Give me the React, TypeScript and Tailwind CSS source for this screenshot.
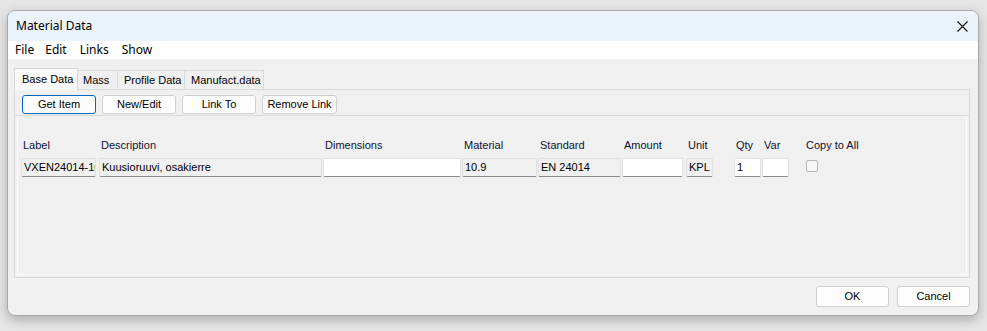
import React from "react";

const font = { fontFamily: '"Liberation Sans", Arial, sans-serif' };

function Btn({ label, w, focused }: { label: string; w: string; focused?: boolean }) {
  return (
    <div
      className={`${w} h-[19px] flex items-center justify-center rounded-[3px] bg-[#fdfdfd] text-[11px] text-black border ${
        focused ? "border-[#0067c0]" : "border-[#d0d0d0]"
      }`}
    >
      {label}
    </div>
  );
}

function Field({
  value,
  w,
  ml,
  white,
}: {
  value?: string;
  w: string;
  ml: string;
  white?: boolean;
}) {
  return (
    <div
      className={`${w} ${ml} h-[19px] flex items-center pl-[2px] overflow-hidden whitespace-nowrap rounded-[2px] border border-[#e0e0e0] border-b-[#8a8a8a] text-[11px] text-black ${
        white ? "bg-white" : "bg-[#f0f0f0]"
      }`}
    >
      {value}
    </div>
  );
}

function Header({ text, w, ml }: { text: string; w: string; ml: string }) {
  return <div className={`${w} ${ml} pl-[2px] text-[11px] text-[#101030] whitespace-nowrap`}>{text}</div>;
}

export default function App() {
  return (
    <div className="w-[987px] h-[331px] bg-[#e6e6e6] pt-[10px] pl-[7px]" style={font}>
      <div className="w-[972px] h-[306px] rounded-[8px] border border-[#a8a8a8] bg-[#f0f0f0] shadow-[0_4px_12px_rgba(0,0,0,0.25)] overflow-hidden flex flex-col">
        {/* Title bar */}
        <div className="h-[30px] bg-[#eaf3fa] flex items-center justify-between pl-[8px] pr-[10px]">
          <span className="text-[12px] text-black" style={{ fontFamily: '"Noto Sans", "Liberation Sans", sans-serif' }}>
            Material Data
          </span>
          <svg width="11" height="11" viewBox="0 0 11 11">
            <path d="M0.5 0.5 L10.5 10.5 M10.5 0.5 L0.5 10.5" stroke="#111" strokeWidth="1.1" />
          </svg>
        </div>
        {/* Menu bar */}
        <div
          className="h-[18px] bg-white flex items-center pl-[7px] gap-[13px] text-[12px] text-black"
          style={{ fontFamily: '"Noto Sans", "Liberation Sans", sans-serif' }}
        >
          <span>File</span>
          <span className="-ml-[2px]">Edit</span>
          <span>Links</span>
          <span>Show</span>
        </div>
        {/* Content */}
        <div className="flex-1 flex flex-col pl-[6px] pr-[8px] pt-[8px]">
          {/* Tabs */}
          <div className="flex items-end h-[22px] text-[11px] text-black">
            <div className="w-[64px] h-[22px] bg-[#f9f9f9] border border-[#d9d9d9] border-b-0 flex items-center pl-[7px] relative z-10 -mb-px">
              Base Data
            </div>
            <div className="w-[40px] h-[19px] border border-[#d9d9d9] border-b-0 border-l-0 flex items-center pl-[5px]">Mass</div>
            <div className="w-[67px] h-[19px] border border-[#d9d9d9] border-b-0 border-l-0 flex items-center pl-[6px]">
              Profile Data
            </div>
            <div className="w-[79px] h-[19px] border border-[#d9d9d9] border-b-0 border-l-0 flex items-center pl-[6px]">
              Manufact.data
            </div>
          </div>
          {/* Tab panel */}
          <div className="h-[189px] border border-[#d9d9d9] flex flex-col">
            <div className="h-[26px] flex items-start pt-[5px] pl-[7px] gap-[6px] border-b border-[#d9d9d9]">
              <Btn label="Get Item" w="w-[74px]" focused />
              <Btn label="New/Edit" w="w-[74px]" />
              <Btn label="Link To" w="w-[74px]" />
              <Btn label="Remove Link" w="w-[75px]" />
            </div>
            <div className="flex-1 mx-[2px] mb-[2px] border border-[#fafafa] border-t-0 pt-[23px] pl-[3px]">
              <div className="flex h-[12px] items-center">
                <Header text="Label" w="w-[75px]" ml="ml-0" />
                <Header text="Description" w="w-[223px]" ml="ml-[3px]" />
                <Header text="Dimensions" w="w-[138px]" ml="ml-[1px]" />
                <Header text="Material" w="w-[75px]" ml="ml-[1px]" />
                <Header text="Standard" w="w-[83px]" ml="ml-[1px]" />
                <Header text="Amount" w="w-[61px]" ml="ml-[1px]" />
                <Header text="Unit" w="w-[27px]" ml="ml-[3px]" />
                <Header text="Qty" w="w-[27px]" ml="ml-[21px]" />
                <Header text="Var" w="w-[27px]" ml="ml-[1px]" />
                <Header text="Copy to All" w="w-[80px]" ml="ml-[15px]" />
              </div>
              <div className="flex items-center mt-[7px]">
                <Field value="VXEN24014-10" w="w-[75px]" ml="ml-0" />
                <Field value="Kuusioruuvi, osakierre" w="w-[223px]" ml="ml-[3px]" />
                <Field w="w-[138px]" ml="ml-[1px]" white />
                <Field value="10.9" w="w-[75px]" ml="ml-[1px]" />
                <Field value="EN 24014" w="w-[83px]" ml="ml-[1px]" />
                <Field w="w-[61px]" ml="ml-[1px]" white />
                <Field value="KPL" w="w-[27px]" ml="ml-[3px]" />
                <Field value="1" w="w-[27px]" ml="ml-[21px]" white />
                <Field w="w-[27px]" ml="ml-[1px]" white />
                <div className="ml-[17px] w-[12px] h-[12px] rounded-[2px] border border-[#b5b5b5] bg-[#f6f6f6] -mt-[3px]" />
              </div>
            </div>
          </div>
          {/* Bottom buttons */}
          <div className="flex justify-end gap-[8px] mt-[8px]">
            <Btn label="OK" w="w-[73px] h-[21px]" />
            <Btn label="Cancel" w="w-[73px] h-[21px]" />
          </div>
        </div>
      </div>
    </div>
  );
}
